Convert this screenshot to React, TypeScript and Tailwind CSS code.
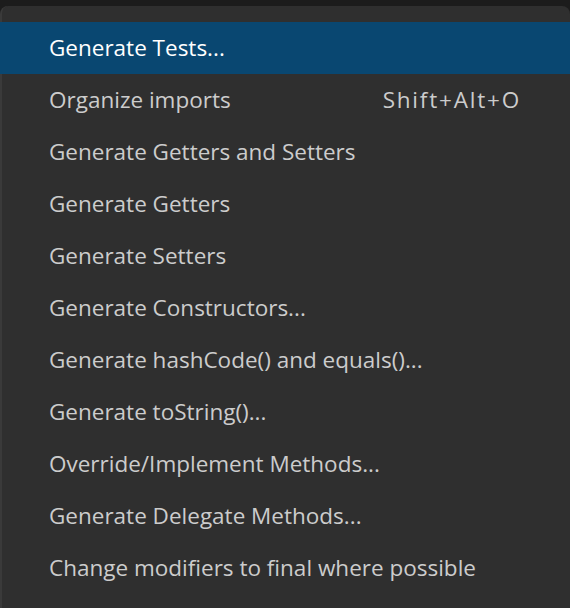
import React from "react";

const items: { label: string; shortcut?: string; active?: boolean }[] = [
  { label: "Generate Tests...", active: true },
  { label: "Organize imports", shortcut: "Shift+Alt+O" },
  { label: "Generate Getters and Setters" },
  { label: "Generate Getters" },
  { label: "Generate Setters" },
  { label: "Generate Constructors..." },
  { label: "Generate hashCode() and equals()..." },
  { label: "Generate toString()..." },
  { label: "Override/Implement Methods..." },
  { label: "Generate Delegate Methods..." },
  { label: "Change modifiers to final where possible" },
];

export default function App() {
  return (
    <div
      className="w-[570px] h-[608px] bg-[#1c1c1c] overflow-hidden pt-[6px]"
      style={{ fontFamily: '"Open Sans", "Noto Sans", sans-serif' }}
    >
      <div className="h-[602px] bg-[#2f2f2f] rounded-tl-[8px] rounded-tr-[8px] border-l-[2px] border-[#3a3a3a] py-[16px]">
        {items.map((it) => (
          <div
            key={it.label}
            className={
              it.active
                ? "-ml-[2px] h-[52px] flex items-center pl-[49px] pr-[49px] bg-[#094771] text-white"
                : "h-[52px] flex items-center pl-[47px] pr-[49px] text-[#cccccc]"
            }
          >
            <span className="flex-1 text-[22.5px] leading-none whitespace-nowrap">{it.label}</span>
            {it.shortcut && (
              <span className="text-[22.5px] leading-none whitespace-nowrap tracking-[1.8px]">{it.shortcut}</span>
            )}
          </div>
        ))}
      </div>
    </div>
  );
}
